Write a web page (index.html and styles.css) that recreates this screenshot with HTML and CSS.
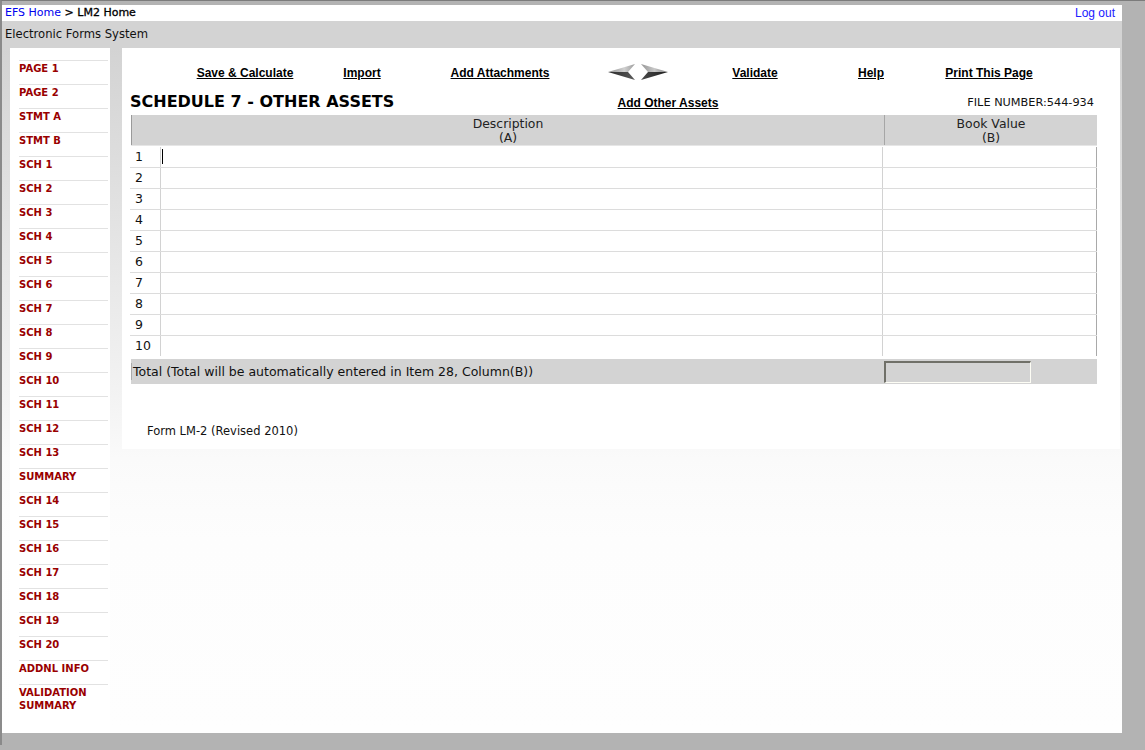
FILE: index.html
```html
<!DOCTYPE html>
<html>
<head>
<meta charset="utf-8">
<title>LM-2 Schedule 7</title>
<link rel="stylesheet" href="styles.css">
</head>
<body>
<div class="page">
  <div class="topbar">
    <div class="crumbs"><a class="home-link" href="#">EFS Home</a> &gt; LM2 Home</div>
    <a class="logout" href="#">Log out</a>
  </div>
  <div class="titlebar">Electronic Forms System</div>
  <div class="content">
    <nav class="sidebar">
      <a href="#">PAGE 1</a>
      <a href="#">PAGE 2</a>
      <a href="#">STMT A</a>
      <a href="#">STMT B</a>
      <a href="#">SCH 1</a>
      <a href="#">SCH 2</a>
      <a href="#">SCH 3</a>
      <a href="#">SCH 4</a>
      <a href="#">SCH 5</a>
      <a href="#">SCH 6</a>
      <a href="#">SCH 7</a>
      <a href="#">SCH 8</a>
      <a href="#">SCH 9</a>
      <a href="#">SCH 10</a>
      <a href="#">SCH 11</a>
      <a href="#">SCH 12</a>
      <a href="#">SCH 13</a>
      <a href="#">SUMMARY</a>
      <a href="#">SCH 14</a>
      <a href="#">SCH 15</a>
      <a href="#">SCH 16</a>
      <a href="#">SCH 17</a>
      <a href="#">SCH 18</a>
      <a href="#">SCH 19</a>
      <a href="#">SCH 20</a>
      <a href="#">ADDNL INFO</a>
      <a href="#">VALIDATION SUMMARY</a>
    </nav>
    <div class="main">
      <div class="toolbar">
        <a class="tool" href="#">Save &amp; Calculate</a>
        <a class="tool" href="#">Import</a>
        <a class="tool" href="#">Add Attachments</a>
        <div class="arrows">
          <svg width="62" height="18" viewBox="0 0 62 18">
            <defs>
              <linearGradient id="lt" x1="0" y1="0" x2="1" y2="0">
                <stop offset="0" stop-color="#8a8a8a"/>
                <stop offset="0.6" stop-color="#d0d0d0"/>
                <stop offset="1" stop-color="#9a9a9a"/>
              </linearGradient>
              <linearGradient id="dk" x1="0" y1="0" x2="1" y2="0">
                <stop offset="0" stop-color="#2a2a2a"/>
                <stop offset="1" stop-color="#5a5a5a"/>
              </linearGradient>
              <linearGradient id="rt" x1="0" y1="0" x2="1" y2="0">
                <stop offset="0" stop-color="#949494"/>
                <stop offset="0.5" stop-color="#c8c8c8"/>
                <stop offset="1" stop-color="#7a7a7a"/>
              </linearGradient>
              <linearGradient id="rd" x1="0" y1="0" x2="1" y2="0">
                <stop offset="0" stop-color="#4a4a4a"/>
                <stop offset="1" stop-color="#1e1e1e"/>
              </linearGradient>
            </defs>
            <polygon points="1,9 28,1 21,9" fill="url(#lt)"/>
            <polygon points="1,9 21,9 28,17" fill="url(#dk)"/>
            <polygon points="61,9 34,1 41,9" fill="url(#rt)"/>
            <polygon points="61,9 41,9 34,17" fill="url(#rd)"/>
          </svg>
        </div>
        <a class="tool" href="#">Validate</a>
        <a class="tool" href="#">Help</a>
        <a class="tool" href="#">Print This Page</a>
      </div>
      <div class="titlerow">
        <h1 class="title">SCHEDULE 7 - OTHER ASSETS</h1>
        <a class="tool add-link" href="#">Add Other Assets</a>
        <div class="filenum">FILE NUMBER:544-934</div>
      </div>
      <div class="form">
        <div class="head">
          <div class="hcell">Description<br>(A)</div>
          <div class="hcell hval">Book Value<br>(B)</div>
        </div>
        <div class="rows">
          <div class="row"><div class="num">1</div><div class="desc"><span class="caret"></span></div><div class="val"></div></div>
          <div class="row"><div class="num">2</div><div class="desc"></div><div class="val"></div></div>
          <div class="row"><div class="num">3</div><div class="desc"></div><div class="val"></div></div>
          <div class="row"><div class="num">4</div><div class="desc"></div><div class="val"></div></div>
          <div class="row"><div class="num">5</div><div class="desc"></div><div class="val"></div></div>
          <div class="row"><div class="num">6</div><div class="desc"></div><div class="val"></div></div>
          <div class="row"><div class="num">7</div><div class="desc"></div><div class="val"></div></div>
          <div class="row"><div class="num">8</div><div class="desc"></div><div class="val"></div></div>
          <div class="row"><div class="num">9</div><div class="desc"></div><div class="val"></div></div>
          <div class="row"><div class="num">10</div><div class="desc"></div><div class="val"></div></div>
        </div>
        <div class="total">
          <div class="tlabel">Total (Total will be automatically entered in Item 28, Column(B))</div>
          <div class="tbox"></div>
        </div>
      </div>
      <div class="footer">Form LM-2 (Revised 2010)</div>
    </div>
  </div>
</div>
</body>
</html>
```
FILE: styles.css
```css
html, body {
  margin: 0;
  padding: 0;
}
body {
  background: #b3b3b3;
  border-top: 1px solid #7c7c7c;
  border-left: 2px solid #8a8a8a;
  padding-top: 4px;
  min-height: 745px;
  box-sizing: border-box;
  font-family: "DejaVu Sans", Verdana, sans-serif;
  color: #111;
}
.page {
  width: 1120px;
  height: 728px;
  background: #fff;
  display: flex;
  flex-direction: column;
}
.topbar {
  height: 16px;
  display: flex;
  justify-content: space-between;
  align-items: center;
  padding: 0 7px 0 3px;
  background: #fff;
}
.crumbs {
  font-size: 11px;
  color: #000;
  line-height: 16px;
  -webkit-text-stroke: 0.3px #000;
}
.home-link {
  color: #0000ee;
  text-decoration: none;
  -webkit-text-stroke: 0;
}
.logout {
  font-family: "Liberation Sans", Arial, sans-serif;
  font-size: 12px;
  color: #2020ff;
  text-decoration: none;
  line-height: 16px;
}
.titlebar {
  height: 27px;
  background: #d3d3d3;
  font-size: 11.6px;
  line-height: 26px;
  padding-left: 3px;
  color: #111;
}
.content {
  flex: 1;
  display: flex;
  align-items: flex-start;
  gap: 12px;
  padding-left: 8px;
  background: linear-gradient(to bottom, #d3d3d3 0px, #f3f3f3 350px, #fafafa 410px, #fdfdfd 490px, #fefefe 685px);
}
.sidebar {
  width: 100px;
  height: 685px;
  box-sizing: border-box;
  background: #fff;
  padding: 12px 2px 0 9px;
  display: flex;
  flex-direction: column;
}
.sidebar a {
  display: block;
  border-top: 1px solid #e2e2e2;
  padding: 1px 0 9px 0;
  line-height: 13px;
  font-size: 10px;
  font-weight: bold;
  color: #990000;
  text-decoration: none;
}
.main {
  width: 998px;
  height: 401px;
  box-sizing: border-box;
  background: #fff;
  padding: 17px 23px 0 8px;
}
.toolbar {
  display: grid;
  grid-template-columns: 118px 116px 160px 116px 118px 114px 122px;
  margin-left: 56px;
  height: 16px;
  align-items: center;
}
.tool {
  justify-self: center;
  font-family: "Liberation Sans", Arial, sans-serif;
  font-size: 12px;
  font-weight: bold;
  color: #000;
  text-decoration: underline;
  line-height: 16px;
  white-space: nowrap;
}
.arrows {
  justify-self: center;
  height: 18px;
  margin-top: -3px;
}
.arrows svg {
  display: block;
}
.titlerow {
  display: grid;
  grid-template-columns: 488px 100px 1fr;
  align-items: center;
  margin-top: 12px;
  height: 18px;
}
.title {
  margin: 0;
  font-size: 16px;
  font-weight: bold;
  color: #000;
  line-height: 18px;
  white-space: nowrap;
}
.add-link {
  margin-top: 2px;
}
.filenum {
  justify-self: end;
  padding-right: 3px;
  font-size: 11.3px;
  color: #111;
}
.form {
  width: 967px;
  margin-top: 4px;
}
.head {
  display: grid;
  grid-template-columns: 753px 1fr;
  margin-left: 1px;
  height: 30px;
  background: #d3d3d3;
  border-bottom: 1px solid #e6e6e6;
}
.hcell {
  border-left: 1px solid #9a9a9a;
  text-align: center;
  font-size: 12.4px;
  line-height: 14px;
  padding-top: 2px;
  color: #222;
}
.hval {
  border-left-color: #a6a6a6;
}
.rows {
  margin-top: 1px;
}
.row {
  display: grid;
  grid-template-columns: 31px 722px 214px;
  height: 21px;
  box-sizing: border-box;
  border-bottom: 1px solid #dcdcdc;
}
.row:last-child {
  border-bottom: none;
  height: 20px;
}
.num {
  border-right: 1px solid #d2d2d2;
  font-size: 12.5px;
  line-height: 20px;
  padding-left: 5px;
  color: #111;
}
.desc {
  border-right: 1px solid #d2d2d2;
  position: relative;
}
.val {
  border-right: 1px solid #a9a9a9;
}
.caret {
  position: absolute;
  left: 1px;
  top: 2px;
  width: 1px;
  height: 15px;
  background: #000;
}
.total {
  display: grid;
  grid-template-columns: 753px 147px 1fr;
  margin-top: 3px;
  margin-left: 1px;
  height: 25px;
  background: #d3d3d3;
  align-items: center;
}
.tlabel {
  border-left: 1px solid #aaa;
  font-size: 12.5px;
  line-height: 17px;
  color: #111;
  padding-left: 1px;
  white-space: nowrap;
}
.tbox {
  height: 22px;
  box-sizing: border-box;
  margin-top: 1px;
  border-style: solid;
  border-width: 2px 1px 1px 2px;
  border-color: #707068 #fdfdf5 #fdfdf5 #707068;
  background: #d3d3d3;
}
.footer {
  margin-top: 40px;
  padding-left: 17px;
  font-size: 11.5px;
  line-height: 14px;
  color: #111;
}
```
